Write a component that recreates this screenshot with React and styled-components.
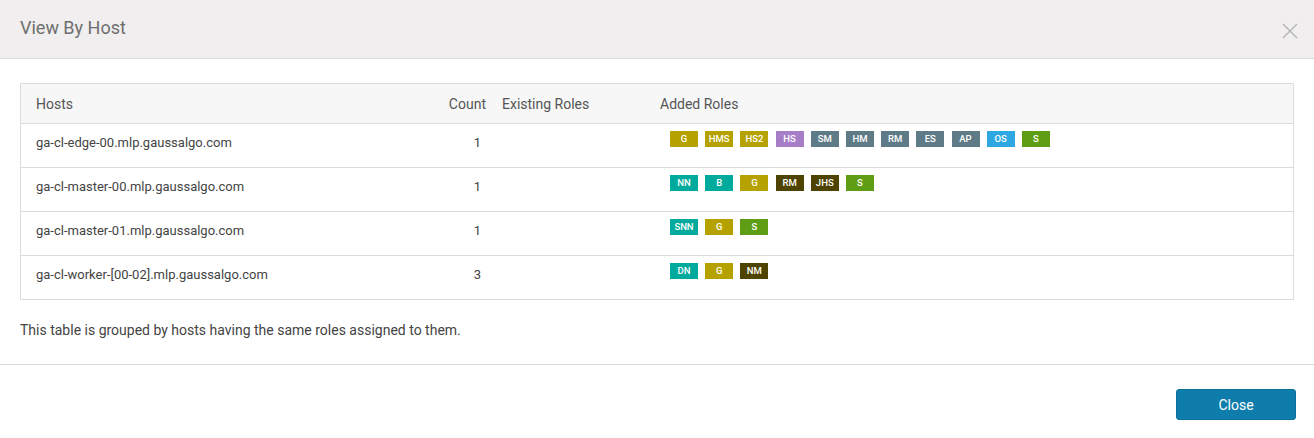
import styled, { createGlobalStyle } from 'styled-components';

const GlobalStyle = createGlobalStyle`
  body {
    margin: 0;
    background: #ffffff;
    font-family: Roboto, "Liberation Sans", Arial, sans-serif;
    color: #444;
  }
`;

const ROLE_COLORS = {
  olive: '#b5a200',
  purple: '#a67ec8',
  slate: '#5f7b88',
  sky: '#2ea8e0',
  green: '#5f9e14',
  teal: '#00aa9c',
  brown: '#4e4300',
};

const ROWS = [
  {
    host: 'ga-cl-edge-00.mlp.gaussalgo.com',
    count: 1,
    roles: [
      ['G', 'olive'], ['HMS', 'olive'], ['HS2', 'olive'], ['HS', 'purple'],
      ['SM', 'slate'], ['HM', 'slate'], ['RM', 'slate'], ['ES', 'slate'],
      ['AP', 'slate'], ['OS', 'sky'], ['S', 'green'],
    ],
  },
  {
    host: 'ga-cl-master-00.mlp.gaussalgo.com',
    count: 1,
    roles: [
      ['NN', 'teal'], ['B', 'teal'], ['G', 'olive'], ['RM', 'brown'],
      ['JHS', 'brown'], ['S', 'green'],
    ],
  },
  {
    host: 'ga-cl-master-01.mlp.gaussalgo.com',
    count: 1,
    roles: [['SNN', 'teal'], ['G', 'olive'], ['S', 'green']],
  },
  {
    host: 'ga-cl-worker-[00-02].mlp.gaussalgo.com',
    count: 3,
    roles: [['DN', 'teal'], ['G', 'olive'], ['NM', 'brown']],
  },
];

const Modal = styled.div`
  width: 1314px;
  height: 438px;
  background: #fff;
  display: flex;
  flex-direction: column;
`;

const Header = styled.header`
  height: 59px;
  padding: 0 16px 0 20px;
  background: #f0eeef;
  border-bottom: 1px solid #dcdcdc;
  display: flex;
  align-items: center;
  justify-content: space-between;
  box-sizing: border-box;
  flex-shrink: 0;
`;

const Title = styled.h4`
  margin: 0 0 3px;
  font-size: 18px;
  font-weight: 400;
  color: #6e6e6e;
`;

const CloseIcon = styled.button`
  border: none;
  background: none;
  padding: 0;
  width: 16px;
  height: 16px;
  margin-top: 4px;
  cursor: pointer;
  display: flex;
`;

const Body = styled.div`
  padding: 24px 20px 24px;
  border-bottom: 1px solid #dcdcdc;
`;

const Table = styled.div`
  border: 1px solid #dcdcdc;
`;

const Row = styled.div`
  display: grid;
  grid-template-columns: 409px 64px 158px 1fr;
  height: ${(p) => (p.$head ? '39px' : '43px')};
  background: ${(p) => (p.$head ? '#f7f7f7' : '#fff')};
  border-top: ${(p) => (p.$first ? 'none' : '1px solid #dcdcdc')};
  align-items: ${(p) => (p.$head ? 'center' : 'start')};
`;

const HeadCell = styled.div`
  font-size: 14px;
  font-weight: 400;
  color: #555;
  padding: 0 8px;
  text-align: ${(p) => (p.$right ? 'right' : 'left')};
  &:first-child {
    padding-left: 15px;
  }
`;

const Cell = styled.div`
  font-size: 13px;
  color: #444;
  line-height: 20px;
  padding: 9px 8px 0;
  text-align: ${(p) => (p.$right ? 'right' : 'left')};
  padding-right: ${(p) => (p.$right ? '13px' : '8px')};
  &:first-child {
    padding-left: 15px;
  }
`;

const Badges = styled.div`
  display: flex;
  gap: 7.2px;
  padding: 7px 0 0 18px;
`;

const Badge = styled.span`
  width: 28px;
  height: 16px;
  line-height: 16px;
  text-align: center;
  font-size: 9.5px;
  font-weight: 500;
  color: #fff;
  background: ${(p) => ROLE_COLORS[p.$tone]};
`;

const Note = styled.p`
  margin: 20px 0 0;
  font-size: 14px;
  line-height: 20px;
  color: #444;
`;

const Footer = styled.footer`
  display: flex;
  justify-content: flex-end;
  padding: 24px 18px 0;
`;

const Button = styled.button`
  width: 120px;
  height: 31px;
  background: #0f7dab;
  border: 1px solid #0c6f99;
  border-radius: 3px;
  color: #fff;
  font-family: inherit;
  font-size: 14px;
  cursor: pointer;
`;

export default function App() {
  return (
    <>
      <GlobalStyle />
      <Modal>
        <Header>
          <Title>View By Host</Title>
          <CloseIcon aria-label="Close">
            <svg width="16" height="16" viewBox="0 0 16 16">
              <path d="M1 1 L15 15 M15 1 L1 15" stroke="#b3b3b3" strokeWidth="1.4" fill="none" />
            </svg>
          </CloseIcon>
        </Header>
        <Body>
          <Table>
            <Row $head $first>
              <HeadCell>Hosts</HeadCell>
              <HeadCell $right>Count</HeadCell>
              <HeadCell>Existing Roles</HeadCell>
              <HeadCell>Added Roles</HeadCell>
            </Row>
            {ROWS.map((r) => (
              <Row key={r.host}>
                <Cell>{r.host}</Cell>
                <Cell $right>{r.count}</Cell>
                <Cell />
                <Badges>
                  {r.roles.map(([label, tone], i) => (
                    <Badge key={i} $tone={tone}>{label}</Badge>
                  ))}
                </Badges>
              </Row>
            ))}
          </Table>
          <Note>This table is grouped by hosts having the same roles assigned to them.</Note>
        </Body>
        <Footer>
          <Button>Close</Button>
        </Footer>
      </Modal>
    </>
  );
}
